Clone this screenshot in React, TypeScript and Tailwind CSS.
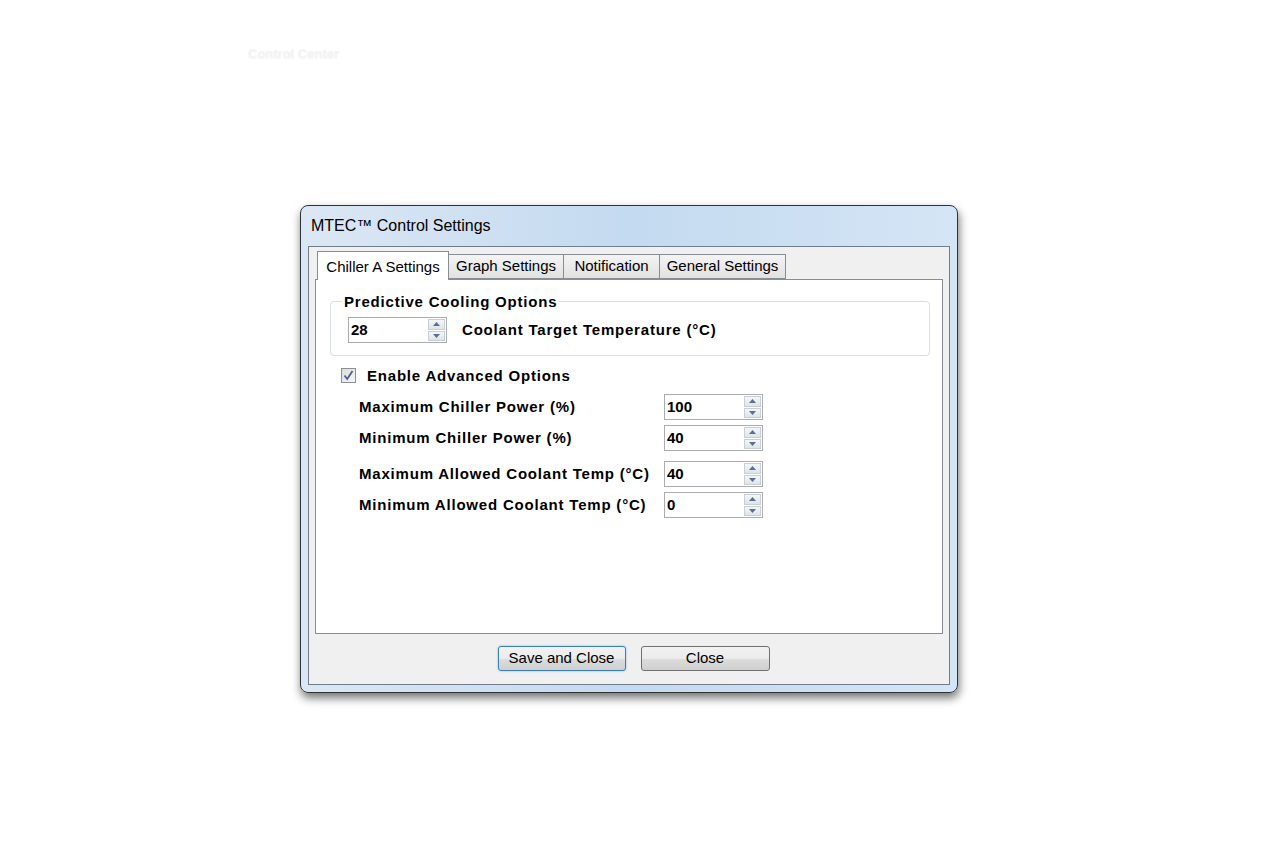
import React from 'react';

const uiFont = { fontFamily: '"Liberation Sans", Arial, sans-serif' };

// little up/down arrow used by the spin buttons
const Arrow: React.FC<{ up?: boolean }> = ({ up }) => (
  <svg width="7" height="4" viewBox="0 0 7 4">
    <path d={up ? 'M0 4 L3.5 0 L7 4 Z' : 'M0 0 L3.5 4 L7 0 Z'} fill="#5a6f8f" />
  </svg>
);

const Spinner: React.FC<{ value: string }> = ({ value }) => (
  <div className="flex h-[26px] w-[99px] shrink-0 border border-[#abadb3] bg-white">
    <div className="flex flex-1 items-center pl-[2px] text-[15px] font-bold text-black">{value}</div>
    <div className="my-[1px] mr-[1px] flex w-[17px] flex-col gap-[1px]">
      <div className="flex flex-1 items-center justify-center border border-[#c9ced6] bg-gradient-to-b from-[#f4f6f8] to-[#dfe4ea]">
        <Arrow up />
      </div>
      <div className="flex flex-1 items-center justify-center border border-[#c9ced6] bg-gradient-to-b from-[#f4f6f8] to-[#dfe4ea]">
        <Arrow />
      </div>
    </div>
  </div>
);

const Tab: React.FC<{ label: string; active?: boolean; width: string }> = ({ label, active, width }) =>
  active ? (
    <div
      className={`relative z-10 -mb-[1px] ml-[2px] flex h-[29px] items-start justify-center border border-b-0 border-[#898c95] bg-white pt-[4px] text-[15px] text-black ${width}`}
    >
      {label}
    </div>
  ) : (
    <div
      className={`flex h-[25px] items-center justify-center border border-l-0 border-[#898c95] bg-gradient-to-b from-[#f4f4f4] to-[#e1e1e1] pt-[1px] text-[15px] text-black ${width}`}
    >
      {label}
    </div>
  );

const Row: React.FC<{ label: string; value: string; className?: string }> = ({ label, value, className }) => (
  <div className={`flex items-center ${className ?? ''}`}>
    <div className="w-[305px] text-[15px] font-bold tracking-[0.8px] text-black">{label}</div>
    <Spinner value={value} />
  </div>
);

export default function App() {
  return (
    <div className="relative min-h-[853px] w-full bg-white" style={uiFont}>
      {/* faint leftover caption from the page behind */}
      <div className="pl-[248px] pt-[44px] text-[13px] font-bold text-[#f3f3f3] [text-shadow:0_1px_2px_rgba(0,0,0,0.06)]">
        Control Center
      </div>

      <div className="ml-[300px] mt-[141px] flex h-[488px] w-[658px] flex-col rounded-[8px] border border-[#2e3236] bg-gradient-to-r from-[#dbe7f4] via-[#c4daf0] to-[#d4e5f5] px-[7px] pb-[7px] shadow-[1px_5px_10px_rgba(0,0,0,0.55)]">
        {/* title bar */}
        <div className="flex h-[40px] items-center pl-[3px] text-[16px] text-black">MTEC™ Control Settings</div>

        {/* client area */}
        <div className="flex flex-1 flex-col border border-[#6f7d8c] bg-[#f0f0f0] px-[6px] pt-[4px]">
          <div className="flex items-end">
            <Tab label="Chiller A Settings" active width="w-[132px]" />
            <Tab label="Graph Settings" width="w-[115px]" />
            <Tab label="Notification" width="w-[96px]" />
            <Tab label="General Settings" width="w-[126px]" />
          </div>

          <div className="h-[355px] border border-[#898c95] bg-white pl-[14px] pr-[12px] pt-[11px]">
            <fieldset className="h-[65px] rounded-[4px] border border-[#d5dfe5] px-[17px]">
              <legend className="ml-[-6px] px-[2px] text-[15px] font-bold tracking-[0.8px] text-black">
                Predictive Cooling Options
              </legend>
              <div className="mt-[4px] flex items-center">
                <Spinner value="28" />
                <span className="ml-[15px] text-[15px] font-bold tracking-[0.8px] text-black">
                  Coolant Target Temperature (°C)
                </span>
              </div>
            </fieldset>

            <div className="ml-[11px] mt-[9px] flex items-center">
              <div className="flex h-[15px] w-[15px] items-center justify-center border border-[#8e8f8f] bg-gradient-to-br from-[#dcdcdc] to-[#f6f6f6]">
                <svg width="11" height="11" viewBox="0 0 11 11">
                  <path d="M1.5 5.5 L4.2 9 L9.5 1" fill="none" stroke="#4a5d94" strokeWidth="1.8" />
                </svg>
              </div>
              <span className="ml-[11px] text-[15px] font-bold tracking-[0.8px] text-black">Enable Advanced Options</span>
            </div>

            <div className="ml-[29px] mt-[7px] flex flex-col">
              <Row label="Maximum Chiller Power (%)" value="100" />
              <Row label="Minimum Chiller Power (%)" value="40" className="mt-[5px]" />
              <Row label="Maximum Allowed Coolant Temp (°C)" value="40" className="mt-[10px]" />
              <Row label="Minimum Allowed Coolant Temp (°C)" value="0" className="mt-[5px]" />
            </div>
          </div>

          {/* dialog buttons */}
          <div className="flex flex-1 items-center justify-center gap-[15px] pl-[9px]">
            <button className="h-[25px] w-[128px] rounded-[3px] border border-[#3c7fb1] bg-[linear-gradient(#f2f2f2_0%,#ebebeb_50%,#dddddd_50%,#cfcfcf_100%)] text-[15px] text-black shadow-[0_0_2px_#5fb4e6]">
              Save and Close
            </button>
            <button className="h-[25px] w-[129px] rounded-[3px] border border-[#707070] bg-[linear-gradient(#f2f2f2_0%,#ebebeb_50%,#dddddd_50%,#cfcfcf_100%)] text-[15px] text-black">
              Close
            </button>
          </div>
        </div>
      </div>
    </div>
  );
}
